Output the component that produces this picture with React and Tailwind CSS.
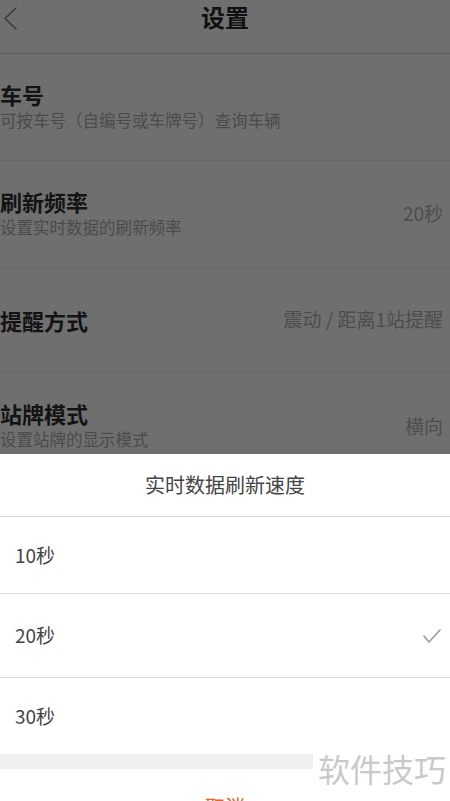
import React from "react";

const font = { fontFamily: '"Noto Sans CJK SC", "Noto Sans", sans-serif' };

function Row({ title, sub, value, last, h }) {
  return (
    <div className={`flex items-center justify-between ${h} shrink-0 pr-[7px] ${last ? "" : "border-b border-[#666666]"}`}>
      <div className="flex flex-col pb-[1px]">
        <div className="text-[22px] leading-[26px] font-bold text-[#131313]">{title}</div>
        {sub && <div className="text-[16.5px] leading-[26px] text-[#4b4b4b] whitespace-nowrap">{sub}</div>}
      </div>
      {value && <div className="text-[19px] leading-[26px] text-[#4d4d4d] whitespace-nowrap pb-[2px]">{value}</div>}
    </div>
  );
}

function Option({ label, checked, h }) {
  return (
    <div className={`flex items-center justify-between pl-[15px] pr-[9px] border-b border-[#dcdcdc] ${h}`}>
      <span className="text-[19px] text-[#444444]">{label}</span>
      {checked && (
        <svg width="18" height="16" viewBox="0 0 18 16" fill="none">
          <polyline points="1,8 6,14 17,2" stroke="#9a9a9a" strokeWidth="1.6" strokeLinecap="round" strokeLinejoin="round" />
        </svg>
      )}
    </div>
  );
}

export default function App() {
  return (
    <div className="relative w-[450px] h-[801px] overflow-hidden flex flex-col bg-white" style={font}>
      <div className="h-[454px] shrink-0 overflow-hidden bg-[#6f6f6f] flex flex-col">
        <div className="relative h-[54px] shrink-0 flex items-center justify-center border-b border-[#5c5c5c] pb-[19px]">
          <svg className="absolute left-[3px] top-[7px]" width="15" height="23" viewBox="0 0 15 23" fill="none">
            <polyline points="13,1 2,11.5 13,22" stroke="#3a3a3a" strokeWidth="1.5" strokeLinecap="round" strokeLinejoin="round" />
          </svg>
          <span className="text-[24px] font-bold text-[#111111] leading-none">设置</span>
        </div>
        <Row h="h-[107px]" title="车号" sub="可按车号（自编号或车牌号）查询车辆" />
        <Row h="h-[107px]" title="刷新频率" sub="设置实时数据的刷新频率" value="20秒" />
        <Row h="h-[105px]" title="提醒方式" value="震动 / 距离1站提醒" />
        <Row h="h-[107px]" title="站牌模式" sub="设置站牌的显示模式" value="横向" last />
      </div>
      <div className="flex flex-col bg-white">
        <div className="h-[63px] flex items-center justify-center border-b border-[#d8d8d8]">
          <span className="text-[20px] text-[#444444]">实时数据刷新速度</span>
        </div>
        <Option label="10秒" h="h-[77px]" />
        <Option label="20秒" checked h="h-[84px]" />
        <div className="h-[76px] flex items-center pl-[15px]">
          <span className="text-[19px] text-[#444444]">30秒</span>
        </div>
        <div className="h-[15px] bg-[#f0f0f2]" />
        <div className="h-[74px] flex items-center justify-center pt-[2px]">
          <span className="text-[20px] text-[#e4671f]">取消</span>
        </div>
      </div>
      <div className="absolute left-[313px] top-[749px] w-[137px] h-[38px] bg-white flex items-center justify-end pr-[4px]">
        <span className="text-[32px] leading-none text-[#c9c9c9]">软件技巧</span>
      </div>
    </div>
  );
}
